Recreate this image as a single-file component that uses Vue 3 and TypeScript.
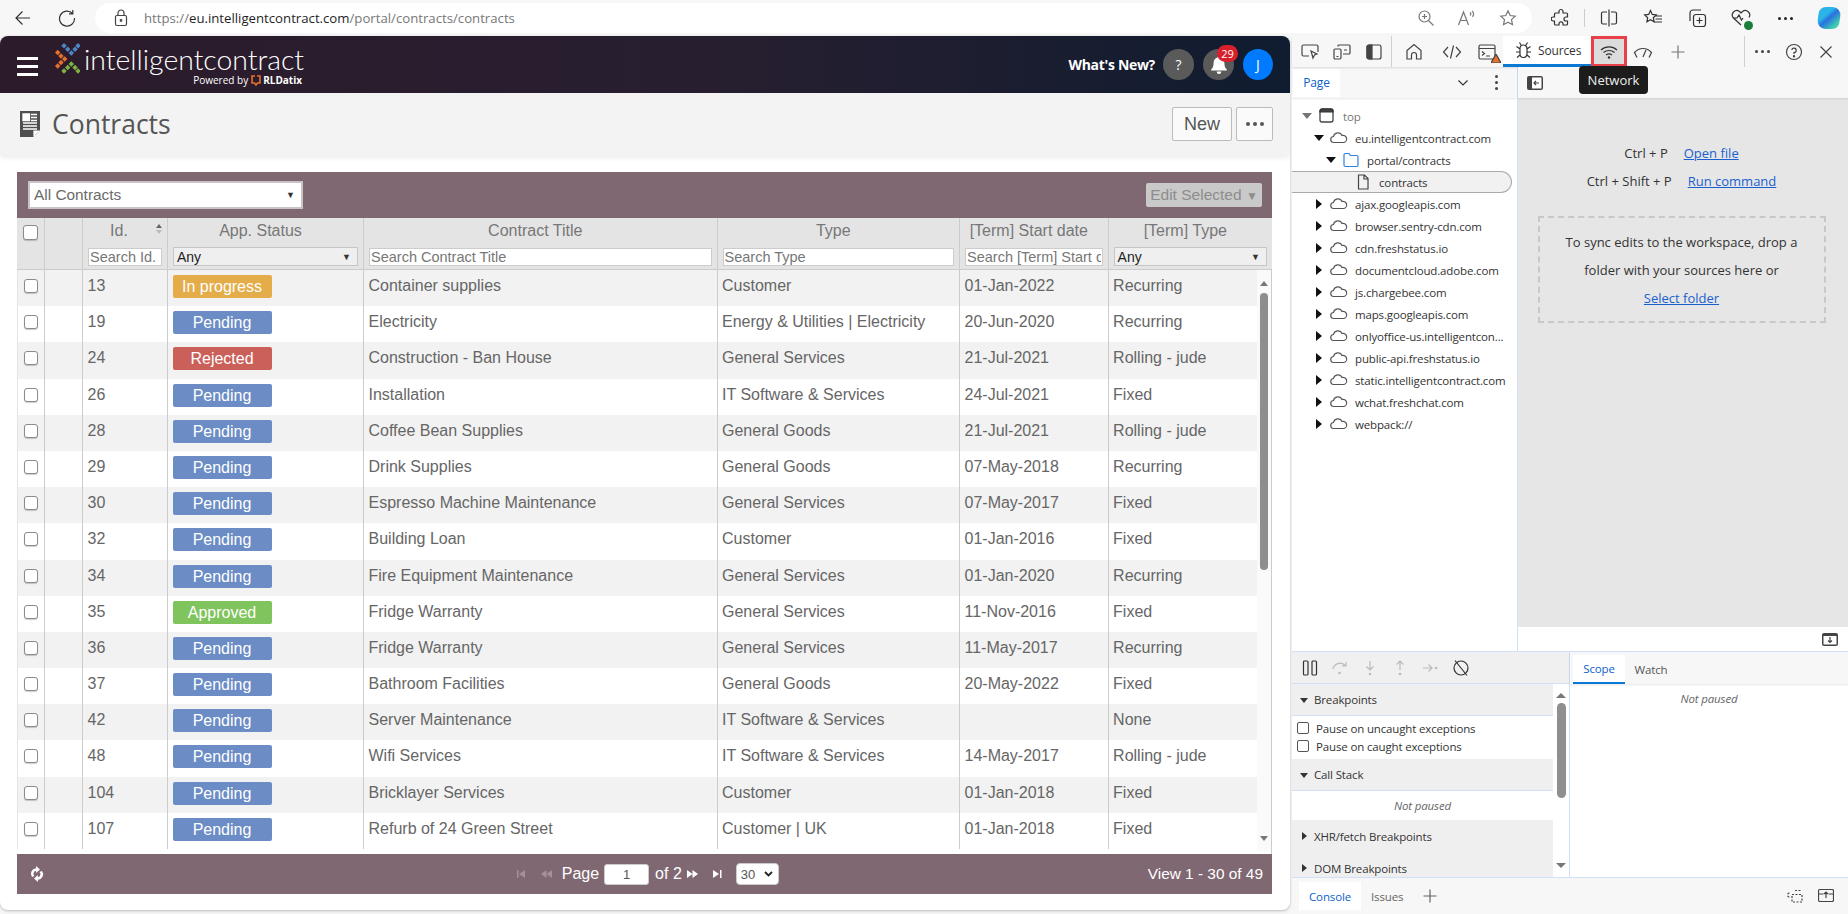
<script setup lang="ts">
interface Row { id: number; status: string; title: string; type: string; start: string; term: string }
const statusClass: Record<string, string> = { 'In progress': 'st-progress', Pending: 'st-pending', Rejected: 'st-rejected', Approved: 'st-approved' }
const rows: Row[] = [
  { id: 13, status: 'In progress', title: 'Container supplies', type: 'Customer', start: '01-Jan-2022', term: 'Recurring' },
  { id: 19, status: 'Pending', title: 'Electricity', type: 'Energy & Utilities | Electricity', start: '20-Jun-2020', term: 'Recurring' },
  { id: 24, status: 'Rejected', title: 'Construction - Ban House', type: 'General Services', start: '21-Jul-2021', term: 'Rolling - jude' },
  { id: 26, status: 'Pending', title: 'Installation', type: 'IT Software & Services', start: '24-Jul-2021', term: 'Fixed' },
  { id: 28, status: 'Pending', title: 'Coffee Bean Supplies', type: 'General Goods', start: '21-Jul-2021', term: 'Rolling - jude' },
  { id: 29, status: 'Pending', title: 'Drink Supplies', type: 'General Goods', start: '07-May-2018', term: 'Recurring' },
  { id: 30, status: 'Pending', title: 'Espresso Machine Maintenance', type: 'General Services', start: '07-May-2017', term: 'Fixed' },
  { id: 32, status: 'Pending', title: 'Building Loan', type: 'Customer', start: '01-Jan-2016', term: 'Fixed' },
  { id: 34, status: 'Pending', title: 'Fire Equipment Maintenance', type: 'General Services', start: '01-Jan-2020', term: 'Recurring' },
  { id: 35, status: 'Approved', title: 'Fridge Warranty', type: 'General Services', start: '11-Nov-2016', term: 'Fixed' },
  { id: 36, status: 'Pending', title: 'Fridge Warranty', type: 'General Services', start: '11-May-2017', term: 'Recurring' },
  { id: 37, status: 'Pending', title: 'Bathroom Facilities', type: 'General Goods', start: '20-May-2022', term: 'Fixed' },
  { id: 42, status: 'Pending', title: 'Server Maintenance', type: 'IT Software & Services', start: '', term: 'None' },
  { id: 48, status: 'Pending', title: 'Wifi Services', type: 'IT Software & Services', start: '14-May-2017', term: 'Rolling - jude' },
  { id: 104, status: 'Pending', title: 'Bricklayer Services', type: 'Customer', start: '01-Jan-2018', term: 'Fixed' },
  { id: 107, status: 'Pending', title: 'Refurb of 24 Green Street', type: 'Customer | UK', start: '01-Jan-2018', term: 'Fixed' },
]
interface Node { label: string; depth: number; arrow: '' | 'open' | 'closed' | 'muted'; icon: 'win' | 'cloud' | 'folder' | 'file'; sel?: boolean }
const hosts = ['ajax.googleapis.com', 'browser.sentry-cdn.com', 'cdn.freshstatus.io', 'documentcloud.adobe.com', 'js.chargebee.com', 'maps.googleapis.com', 'onlyoffice-us.intelligentcon...', 'public-api.freshstatus.io', 'static.intelligentcontract.com', 'wchat.freshchat.com', 'webpack://']
const tree: Node[] = [
  { label: 'top', depth: 0, arrow: 'muted', icon: 'win' },
  { label: 'eu.intelligentcontract.com', depth: 1, arrow: 'open', icon: 'cloud' },
  { label: 'portal/contracts', depth: 2, arrow: 'open', icon: 'folder' },
  { label: 'contracts', depth: 3, arrow: '', icon: 'file', sel: true },
  ...hosts.map((label): Node => ({ label, depth: 1, arrow: 'closed', icon: 'cloud' })),
]
const diamonds = [
  ...[[9, 2.7], [12.7, 6.3], [16.3, 10], [20, 6.3], [23, 2.7]].map(p => ({ p, c: '#4d86c6' })),
  ...[[2.7, 9.5], [6, 13], [9.7, 16], [6, 19.5], [2.7, 23]].map(p => ({ p, c: '#e8702a' })),
  ...[[9, 28], [12.7, 24.5], [16.3, 21], [20, 24.5], [23, 28]].map(p => ({ p, c: '#7cb342' })),
]
function diamond(p: number[]): string {
  const [x, y] = p
  const r = 2.7
  return `${x},${y - r} ${x + r},${y} ${x},${y + r} ${x - r},${y}`
}
</script>

<template>
  <div class="screen">
    <header class="chrome">
      <button class="nav nav-back" aria-label="Back">
        <svg width="18" height="18" viewBox="0 0 18 18"><path d="M16 9H2M8.500 2.500 2 9l6.500 6.500" /></svg>
      </button>
      <button class="nav nav-reload" aria-label="Reload">
        <svg width="18" height="18" viewBox="0 0 18 18"><path d="M14.500 4.500A7.500 7.500 0 1 0 16.500 9M14.800 1v3.800H11" /></svg>
      </button>
      <div class="address">
        <svg class="lock" width="14" height="18" viewBox="0 0 14 18"><rect x="1.500" y="6.500" width="11" height="10" rx="1.500" /><path d="M4 6.500V4a3 3 0 0 1 6 0v2.500" /><circle cx="7" cy="11.500" r=".8" /></svg>
        <span class="url"><span>https://</span><b>eu.intelligentcontract.com</b><span>/portal/contracts/contracts</span></span>
        <div class="addr-icons">
          <svg width="18" height="18" viewBox="0 0 18 18"><circle cx="7.500" cy="7.500" r="5.500" /><path d="m11.500 11.500 5 5M5 7.500h5M7.500 5v5" /></svg>
          <svg width="20" height="18" viewBox="0 0 20 18"><path d="m1.500 16 5-13 5 13M3.500 11.500h6M13 3.500c1 .8 1 2 .2 3M15 2c2 1.500 2 4 .5 5.800" /></svg>
          <svg width="18" height="18" viewBox="0 0 18 18"><path d="m9 1.800 2.200 4.700 5 .6-3.700 3.500 1 5.100L9 13.200l-4.500 2.500 1-5.100L1.800 7.100l5-.6Z" /></svg>
        </div>
      </div>
      <div class="chrome-right">
        <span class="slot"><svg width="20" height="20" viewBox="0 0 20 20"><path d="M8 3.500a2 2 0 0 1 4 0V5h3.500a1 1 0 0 1 1 1v3H15a2 2 0 0 0 0 4h1.500v3a1 1 0 0 1-1 1H12v-1.200a2 2 0 0 0-4 0V17H4.500a1 1 0 0 1-1-1v-3H2.200a2 2 0 0 1 0-4H3.500V6a1 1 0 0 1 1-1H8Z" /></svg></span>
        <i class="chrome-sep"></i>
        <span class="slot"><svg width="20" height="20" viewBox="0 0 20 20"><path d="M10 1.500v17M8 4H4a1.500 1.500 0 0 0-1.500 1.500v9A1.500 1.500 0 0 0 4 16h4M12 4h4a1.500 1.500 0 0 1 1.500 1.500v9A1.500 1.500 0 0 1 16 16h-4" /></svg></span>
        <span class="slot"><svg width="20" height="20" viewBox="0 0 20 20"><path d="m7.500 2.500 1.800 3.900 4 .5-3 2.800.8 4.100-3.600-2-3.600 2 .8-4.100-3-2.800 4-.5ZM13 8h6M12.500 11h6.500M11.500 14H19" /></svg></span>
        <span class="slot"><svg width="20" height="20" viewBox="0 0 20 20"><rect x="6.500" y="6.500" width="12" height="12" rx="2.500" /><path d="M12.500 9.500v6M9.500 12.500h6M3 13V5a3 3 0 0 1 3-3h8" /></svg></span>
        <span class="slot health">
          <svg width="22" height="20" viewBox="0 0 22 20"><path d="M11 17 3 9.500A4.500 4.500 0 0 1 9.500 3.500L11 5l1.500-1.500A4.500 4.500 0 0 1 19 9.500M3 10h4l2-3 2.500 5 1.500-2" /></svg>
          <i class="health-ok"></i>
        </span>
        <span class="slot dots-slot"><i></i><i></i><i></i></span>
        <span class="copilot"></span>
      </div>
    </header>

    <div class="work">
      <main class="page">
        <div class="app-header">
          <div class="brand">
            <span class="burger"><i></i><i></i><i></i></span>
            <svg class="logo-mark" width="25" height="31" viewBox="0 0 25 31">
              <polygon v-for="(d, i) in diamonds" :key="i" :points="diamond(d.p)" :fill="d.c" />
            </svg>
            <div class="wordmark">
              <div class="word">intelligentcontract</div>
              <div class="powered"><span>Powered by</span><svg width="10" height="11" viewBox="0 0 10 11"><path d="M4 1H1v7h2.500l1.500 2 1.500-2H9V1H6" /></svg><b>RLDatix</b></div>
            </div>
          </div>
          <div class="top-actions">
            <span class="whats">What's New?</span>
            <span class="round gray">?</span>
            <span class="round gray bell">
              <svg width="16" height="18" viewBox="0 0 16 18"><path d="M8 0a1.400 1.400 0 0 1 1.400 1.500C12 2 13.400 4.200 13.400 7c0 3.500.8 5 2.400 6.500v1H.2v-1C1.800 12 2.600 10.500 2.600 7 2.600 4.200 4 2 6.600 1.500A1.400 1.400 0 0 1 8 0ZM5.800 15.500h4.400A2.200 2.200 0 0 1 8 18a2.200 2.200 0 0 1-2.200-2.500Z" fill="#fff" /></svg>
              <em>29</em>
            </span>
            <span class="round blue">J</span>
          </div>
        </div>

        <div class="title-bar">
          <h1>
            <svg width="20" height="26" viewBox="0 0 20 26"><path d="M0 0h20v19l-7 7H0Z" fill="#4f4f4f" /><path d="M3 3h6.500v6.500H3ZM11 3.500h6M11 6.500h6M11 9.500h6M3 12h14M3 15h14M3 18h14" stroke="#fff" fill="#fff" stroke-width="1.300" /><path d="M14 25v-5h5" fill="#fff" stroke="#fff" /></svg>
            <span>Contracts</span>
          </h1>
          <div class="title-actions">
            <button class="btn-new">New</button>
            <button class="btn-more"><i></i><i></i><i></i></button>
          </div>
        </div>

        <section class="grid-card">
          <div class="grid-top">
            <div class="view-select"><span>All Contracts</span><small>▼</small></div>
            <button class="edit-selected">Edit Selected <small>▼</small></button>
          </div>

          <div class="thead">
            <div class="th check-cell"><input class="box box-head" type="checkbox" /></div>
            <div class="th"></div>
            <div class="th"><div class="th-label id-label">Id.<span class="sorter"><i></i><i></i></span></div><input class="filter" placeholder="Search Id." /></div>
            <div class="th"><div class="th-label">App. Status</div><div class="filter-select"><span>Any</span><small>▼</small></div></div>
            <div class="th"><div class="th-label">Contract Title</div><input class="filter" placeholder="Search Contract Title" /></div>
            <div class="th"><div class="th-label">Type</div><input class="filter" placeholder="Search Type" /></div>
            <div class="th"><div class="th-label">[Term] Start date</div><input class="filter" placeholder="Search [Term] Start date" /></div>
            <div class="th last"><div class="th-label">[Term] Type</div><div class="filter-select"><span>Any</span><small>▼</small></div></div>
          </div>

          <div class="tbody-wrap">
            <div class="tbody">
              <div v-for="r in rows" :key="r.id" class="tr">
                <div class="td check-cell"><input class="box" type="checkbox" /></div>
                <div class="td"></div>
                <div class="td">{{ r.id }}</div>
                <div class="td"><span class="status" :class="statusClass[r.status]">{{ r.status }}</span></div>
                <div class="td">{{ r.title }}</div>
                <div class="td">{{ r.type }}</div>
                <div class="td">{{ r.start }}</div>
                <div class="td">{{ r.term }}</div>
              </div>
            </div>
            <div class="vscroll"><i class="up"></i><b></b><i class="down"></i></div>
          </div>

          <div class="grid-foot">
            <svg class="refresh" width="14" height="16" viewBox="0 0 14 16"><path d="M2 11A5.500 5.500 0 0 1 6 2.200V0l4 3.500L6 7V4.800A3 3 0 0 0 4.500 10ZM12 5a5.500 5.500 0 0 1-4 8.800V16l-4-3.500L8 9v2.200A3 3 0 0 0 9.500 6Z" fill="#fff" /></svg>
            <div class="pager">
              <svg class="pg dim" width="9" height="8" viewBox="0 0 9 8"><path d="M0 0h1.500v8H0ZM8 0v8L2 4Z" /></svg>
              <svg class="pg dim pg-prev" width="11" height="8" viewBox="0 0 11 8"><path d="M5.500 0v8L0 4ZM11 0v8L5.500 4Z" /></svg>
              <span class="page-word">Page</span>
              <input class="page-input" value="1" />
              <span>of 2</span>
              <svg class="pg pg-next" width="11" height="8" viewBox="0 0 11 8"><path d="M0 0v8l5.500-4ZM5.500 0v8L11 4Z" /></svg>
              <svg class="pg pg-last" width="9" height="8" viewBox="0 0 9 8"><path d="M0 0v8l6-4ZM7 0h1.500v8H7Z" /></svg>
              <div class="size-select">30<svg width="9" height="6" viewBox="0 0 9 6"><path d="m1 1 3.500 3.500L8 1" /></svg></div>
            </div>
            <div class="view-count">View 1 - 30 of 49</div>
          </div>
        </section>
      </main>

      <aside class="devtools">
        <div class="dt-toolbar">
          <div class="dt-group first">
            <span class="ic32"><svg width="18" height="16" viewBox="0 0 18 16"><path d="M8 12H2.500A1.500 1.500 0 0 1 1 10.500v-8A1.500 1.500 0 0 1 2.500 1h13A1.500 1.500 0 0 1 17 2.500V8" /><path d="m10 7 6 3-2.500 1L12 14Z" /></svg></span>
            <span class="ic32"><svg width="18" height="16" viewBox="0 0 18 16"><rect x="1" y="5" width="7" height="10" rx="1.200" /><path d="M5 2.500V2a1 1 0 0 1 1-1h10a1 1 0 0 1 1 1v7a1 1 0 0 1-1 1h-6M11 6h3M3.500 12.500h2" /></svg></span>
            <span class="ic32"><svg width="16" height="16" viewBox="0 0 16 16"><rect x="1" y="1" width="14" height="14" rx="2" /><path d="M1 3a2 2 0 0 1 2-2h3v14H3a2 2 0 0 1-2-2Z" fill="#444" /></svg></span>
          </div>
          <i class="dt-sep"></i>
          <div class="dt-group main-tabs">
            <span class="ic38"><svg width="18" height="18" viewBox="0 0 18 18"><path d="M2 7.500 9 1.500l7 6V16h-4.500v-4a2.500 2.500 0 0 0-5 0v4H2Z" /></svg></span>
            <span class="ic38 code"><svg width="20" height="16" viewBox="0 0 20 16"><path d="M6 3 1.500 8 6 13M14 3l4.500 5L14 13M11.500 1.500 8.500 14.500" /></svg></span>
            <span class="ic32 console">
              <svg width="18" height="16" viewBox="0 0 18 16"><rect x="1" y="1" width="16" height="14" rx="1.500" /><path d="M1 4.500h16M4 7.500l2.500 2L4 11.500M8 12h4" /></svg>
              <svg class="warn" width="10" height="9" viewBox="0 0 10 9"><path d="M5 0 10 9H0Z" fill="#e8702a" /></svg>
            </span>
          </div>
          <div class="tab-sources">
            <svg width="17" height="18" viewBox="0 0 17 18"><path d="M5 7.500a3.500 3.500 0 0 1 7 0V13a3.500 3.500 0 0 1-7 0ZM6 4 4.500 1.500M11 4l1.500-2.500M5 8 1.500 5.500M12 8l3.500-2.500M5 11H1M12 11h4M5 14l-3 2.500M12 14l3 2.500" /></svg>
            <span>Sources</span>
          </div>
          <div class="tab-network"><svg width="18" height="14" viewBox="0 0 18 14"><path d="M1 5a12 12 0 0 1 16 0M3.500 7.500a8.500 8.500 0 0 1 11 0M6 10a5 5 0 0 1 6 0" /><circle cx="9" cy="12.500" r="1.200" fill="#333" stroke="none" /></svg></div>
          <span class="ic32 perf"><svg width="20" height="14" viewBox="0 0 20 14"><path d="M4 12.500 1.500 7.500A11 11 0 0 1 18.500 7.500L16 12.500M10 12l3-7" /></svg></span>
          <span class="ic32 plus"><svg width="16" height="16" viewBox="0 0 16 16"><path d="M8 1.500v13M1.500 8h13" /></svg></span>
          <i class="dt-sep sep-end"></i>
          <span class="ic32 dt-more"><i></i><i></i><i></i></span>
          <span class="ic32"><svg width="18" height="18" viewBox="0 0 18 18"><circle cx="9" cy="9" r="7.500" /><path d="M6.800 7A2.200 2.200 0 1 1 9 9.500V11" /><circle cx="9" cy="13.300" r=".6" /></svg></span>
          <span class="ic32"><svg width="14" height="14" viewBox="0 0 14 14"><path d="m1.500 1.500 11 11M12.500 1.500l-11 11" /></svg></span>
        </div>
        <div class="tooltip">Network</div>

        <div class="dt-upper">
          <div class="nav-pane">
            <div class="pane-tabs">
              <span class="page-tab">Page</span>
              <svg class="chev" width="12" height="8" viewBox="0 0 12 8"><path d="m1.500 1.500 4.500 4.500 4.500-4.500" /></svg>
              <span class="vdots"><i></i><i></i><i></i></span>
            </div>
            <div class="tree">
              <div v-for="n in tree" :key="n.label" class="tree-row" :class="{ selected: n.sel }" :style="{ paddingLeft: 9 + n.depth * 12 + 'px' }">
                <span class="arrow" :class="n.arrow"></span>
                <svg class="t-icon" width="20" height="16" viewBox="0 0 20 16">
                  <template v-if="n.icon === 'win'"><rect x="3" y="1" width="13" height="13" rx="2" stroke="#444" stroke-width="1.300" /><path d="M3 3a2 2 0 0 1 2-2h9a2 2 0 0 1 2 2v1H3Z" fill="#444" /></template>
                  <path v-else-if="n.icon === 'cloud'" d="M5 12.500a3 3 0 0 1-.5-6A4.500 4.500 0 0 1 13 5.500a3.500 3.500 0 0 1 2 7Z" stroke="#555" />
                  <path v-else-if="n.icon === 'folder'" d="M3 3a1.500 1.500 0 0 1 1.500-1.500H8L9.500 3.500h6A1.500 1.500 0 0 1 17 5v8a1.500 1.500 0 0 1-1.500 1.500h-11A1.500 1.500 0 0 1 3 13Z" stroke="#2f7fe0" />
                  <path v-else d="M5.500 1h6L15 4.500V15H5.500ZM11 1v4h4" stroke="#444" />
                </svg>
                <span class="t-label" :class="{ muted: n.icon === 'win' }">{{ n.label }}</span>
              </div>
            </div>
          </div>
          <div class="editor-pane">
            <div class="pane-tabs editor-tabs">
              <svg width="16" height="14" viewBox="0 0 16 14"><rect width="16" height="14" rx="2" fill="#444" /><rect x="5" y="1.500" width="9.500" height="11" fill="#fff" /><path d="M12 7H7M9 4.800 7 7l2 2.200" stroke="#444" fill="none" /></svg>
            </div>
            <div class="editor-body">
              <div class="shortcut"><span>Ctrl + P</span><a>Open file</a></div>
              <div class="shortcut"><span>Ctrl + Shift + P</span><a>Run command</a></div>
              <div class="drop-box">
                <p>To sync edits to the workspace, drop a</p>
                <p>folder with your sources here or</p>
                <p><a>Select folder</a></p>
              </div>
            </div>
            <div class="editor-foot">
              <svg width="16" height="13" viewBox="0 0 16 13"><rect width="16" height="13" rx="2" fill="#444" /><path d="M1.500 3h13v8.500h-13Z" fill="#fff" /><path d="M8 4v5M6 7.500l2 2 2-2" stroke="#444" fill="none" /></svg>
            </div>
          </div>
        </div>

        <div class="dt-lower">
          <div class="dbg-left">
            <div class="dbg-tools">
              <svg width="16" height="16" viewBox="0 0 16 16"><rect x="1.500" y="1" width="4.500" height="14" rx="1" /><rect x="10" y="1" width="4.500" height="14" rx="1" /></svg>
              <svg class="dim" width="16" height="16" viewBox="0 0 16 16"><path d="M1 9a7 7 0 0 1 12-3.500M14 2v4h-4" /><circle cx="7.500" cy="13" r="1.300" fill="#bbb" stroke="none" /></svg>
              <svg class="dim" width="16" height="16" viewBox="0 0 16 16"><path d="M8 1v9M4.500 6.500 8 10l3.500-3.500" /><circle cx="8" cy="14" r="1.300" fill="#bbb" stroke="none" /></svg>
              <svg class="dim" width="16" height="16" viewBox="0 0 16 16"><path d="M8 10V1M4.500 4.500 8 1l3.500 3.500" /><circle cx="8" cy="14" r="1.300" fill="#bbb" stroke="none" /></svg>
              <svg class="dim" width="16" height="16" viewBox="0 0 16 16"><path d="M1 8h9M6.500 4.500 10 8l-3.500 3.500" /><circle cx="14" cy="8" r="1.300" fill="#bbb" stroke="none" /></svg>
              <svg width="18" height="18" viewBox="0 0 18 18"><circle cx="9" cy="9" r="7" /><path d="M3 1.500 15 16.500" /></svg>
            </div>
            <div class="dbg-scrollarea">
              <div class="dbg-sections">
                <div class="sec-head"><span class="arrow-s open"></span>Breakpoints</div>
                <div class="sec-break">
                  <label><input class="box-dt" type="checkbox" />Pause on uncaught exceptions</label>
                  <label><input class="box-dt" type="checkbox" />Pause on caught exceptions</label>
                </div>
                <div class="sec-head"><span class="arrow-s open"></span>Call Stack</div>
                <div class="sec-empty"><em>Not paused</em></div>
                <div class="sec-head plain"><span class="arrow-s closed"></span>XHR/fetch Breakpoints</div>
                <div class="sec-head plain"><span class="arrow-s closed"></span>DOM Breakpoints</div>
              </div>
              <div class="dbg-scroll"><i class="up"></i><b></b><i class="down"></i></div>
            </div>
          </div>
          <div class="dbg-right">
            <div class="scope-tabs"><span class="scope on">Scope</span><span class="scope">Watch</span></div>
            <div class="scope-empty"><em>Not paused</em></div>
          </div>
        </div>

        <div class="drawer">
          <span class="drawer-tab">Console</span>
          <span class="drawer-issues">Issues</span>
          <svg class="drawer-plus" width="14" height="14" viewBox="0 0 14 14"><path d="M7 .5v13M.5 7h13" /></svg>
          <span class="drawer-right">
            <svg width="16" height="14" viewBox="0 0 16 14"><path d="M5 5.500h10v7.500H5ZM8 1.500h7M2.500 4a2 2 0 0 0 0 4" stroke-dasharray="2 1.500" /></svg>
            <svg width="16" height="13" viewBox="0 0 16 13"><rect x=".5" y=".5" width="15" height="12" rx="1.500" /><path d="M.5 5h5M10.500 5h5M8 9V3M6 5l2-2 2 2" /></svg>
          </span>
        </div>
      </aside>
    </div>
  </div>
</template>

<style>
html, body { margin: 0; background: #f7f7f7; overflow: hidden; }
</style>

<style scoped>
.screen { width: 1848px; height: 914px; overflow: hidden; display: flex; flex-direction: column; background: #f7f7f7; font-family: "Liberation Sans", Arial, sans-serif; }
svg { fill: none; stroke: #333; stroke-width: 1.2; display: block; }
i, em { display: block; }
button { font-family: inherit; }

/* browser chrome */
.chrome { height: 36px; flex: none; display: flex; align-items: center; }
.nav { border: 0; background: none; padding: 0; width: 44px; height: 36px; display: flex; align-items: center; justify-content: center; }
.nav-back { margin-left: 1px; }
.nav-reload { margin-right: 6px; }
.address { width: 1437px; height: 30px; background: #fff; border-radius: 15px; display: flex; align-items: center; box-sizing: border-box; padding-left: 19px; }
.lock { stroke: #444; }
.url { margin-left: 16px; font: 13.200px "Open Sans", sans-serif; color: #777; white-space: nowrap; }
.url b { font-weight: 400; color: #1f1f1f; }
.addr-icons { margin-left: auto; display: flex; align-items: center; gap: 22px; padding-right: 15px; }
.addr-icons svg { stroke: #777; }
.chrome-right { display: flex; align-items: center; margin-left: 7px; flex: 1; }
.slot { width: 44px; height: 30px; display: flex; align-items: center; justify-content: center; position: relative; flex: none; }
.chrome-sep { width: 1px; height: 18px; background: #ccc; margin: 0 2px 0 1px; }
.health-ok { position: absolute; right: 10px; bottom: 3px; width: 9px; height: 9px; border-radius: 50%; background: #1d7d3a; }
.dots-slot { gap: 3px; }
.dots-slot i { width: 3px; height: 3px; border-radius: 50%; background: #222; }
.copilot { width: 22px; height: 22px; margin-left: 11px; border-radius: 6px 9px 6px 9px; background: linear-gradient(135deg, #2ab4e8 0 35%, #2a70e0 50%, #40d0b0 85%); transform: skewX(-8deg); }

.work { flex: 1; display: flex; min-height: 0; align-items: flex-start; }

/* page */
.page { width: 1290px; height: 874px; flex: none; background: #fff; border-radius: 8px; box-shadow: 0 1px 3px rgba(0,0,0,.25); overflow: hidden; display: flex; flex-direction: column; }
.app-header { height: 57px; flex: none; background: linear-gradient(90deg, #2c1b2b 0%, #271f30 55%, #101c30 100%); display: flex; justify-content: space-between; align-items: center; padding: 0 17px; box-sizing: border-box; }
.brand { display: flex; align-items: flex-start; height: 100%; }
.burger { width: 21px; display: flex; flex-direction: column; gap: 5px; margin-top: 21px; }
.burger i { height: 3px; background: #fff; }
.logo-mark { margin: 7px 0 0 17px; stroke: none; }
.wordmark { margin-left: 4px; color: #fff; display: flex; flex-direction: column; align-items: flex-end; }
.word { font: 300 28.400px/29px Lato, sans-serif; margin-top: 9px; white-space: nowrap; }
.powered { display: flex; align-items: center; font: 10px/12px "Open Sans", sans-serif; margin-right: 2px; }
.powered svg { margin: 0 2px 0 3px; stroke: #e8702a; stroke-width: 1.600; }
.powered b { font-family: "Open Sans", sans-serif; }
.top-actions { display: flex; align-items: center; }
.whats { font: 700 14px "Open Sans", sans-serif; letter-spacing: -.3px; color: #fff; margin-right: 8px; }
.round { width: 31px; height: 31px; border-radius: 50%; display: flex; align-items: center; justify-content: center; color: #fff; font: 14px "Open Sans", sans-serif; position: relative; }
.round.gray { background: #5a5a5a; margin-right: 9px; }
.round.blue { background: #007bff; width: 30px; }
.bell svg { stroke: none; margin-top: 1px; }
.bell em { position: absolute; left: 14px; top: -4px; width: 21px; height: 17px; border-radius: 9px; background: #d9202a; color: #fff; font: 11px/17px "Open Sans", sans-serif; text-align: center; }

.title-bar { height: 62px; flex: none; background: #f3f3f3; box-shadow: 0 2px 6px rgba(0,0,0,.09); display: flex; justify-content: space-between; align-items: center; padding: 0 17px 0 20px; box-sizing: border-box; position: relative; }
h1 { margin: 0; display: flex; align-items: center; gap: 12px; font: 400 26.500px "Open Sans", sans-serif; color: #555; }
h1 span { margin-top: -1px; }
h1 svg { stroke: none; }
.title-actions { display: flex; gap: 4px; }
.btn-new { width: 60px; height: 34px; background: #fafafa; border: 1px solid #bbb; border-radius: 2px; font: 18px "Liberation Sans", sans-serif; color: #555; padding: 0; }
.btn-more { width: 37px; height: 34px; background: #fafafa; border: 1px solid #bbb; border-radius: 2px; display: flex; align-items: center; justify-content: center; gap: 3px; padding: 0; }
.btn-more i { width: 4px; height: 4px; border-radius: 50%; background: #555; }

.grid-card { margin: 17px 18px 0 17px; display: flex; flex-direction: column; font-size: 16px; color: #666; }
.grid-top { height: 46px; background: #806872; display: flex; align-items: center; justify-content: space-between; padding: 0 10px 0 11px; box-sizing: border-box; }
.view-select { width: 275px; height: 28px; margin-bottom: 1px; box-sizing: border-box; background: #fff; border: 2px solid #c9c2c6; display: flex; align-items: center; justify-content: space-between; padding: 0 6px 0 4px; font-size: 15.400px; color: #6b6b6b; }
.view-select small, .filter-select small { font-size: 9px; color: #333; }
.edit-selected { width: 116px; height: 24px; border: 0; border-radius: 2px; background: #c9c9c9; color: #8d8d8d; font-size: 15.500px; padding: 0; white-space: nowrap; }
.edit-selected small { font-size: 12px; }

.thead, .tr { display: grid; }
.thead { grid-template-columns: 28px 38px 85px 196px 353.500px 242.500px 148.600px 163.400px; height: 52px; background: #e4e4e4; border-bottom: 1px solid #ccc; box-sizing: border-box; }
.th { border-right: 1px solid #ccc; box-sizing: border-box; padding: 0 5px; min-width: 0; display: flex; flex-direction: column; }
.th.last { border-right: 0; }
.th-label { height: 30px; line-height: 26px; text-align: center; color: #777; white-space: nowrap; position: relative; padding-right: 10px; }
.id-label { padding-right: 12px; }
.sorter { position: absolute; right: 0; top: 6px; display: flex; flex-direction: column; gap: 2px; }
.sorter i { width: 0; height: 0; border: 3.500px solid transparent; border-top: 0; border-bottom: 4px solid #666; }
.sorter i + i { border-bottom: 0; border-top: 4px solid #bbb; }
.filter { height: 18px; width: 100%; box-sizing: border-box; border: 1px solid #ccc; background: #fff; padding: 0 1px; font: 14.500px "Liberation Sans", sans-serif; color: #666; outline: 0; min-width: 0; }
.filter::placeholder { color: #777; opacity: 1; }
.filter-select { height: 19px; margin-top: -1px; box-sizing: border-box; border: 1px solid #c6c6c6; background: #efefef; color: #222; font-size: 14px; display: flex; align-items: center; justify-content: space-between; padding: 0 6px 0 3px; }
.check-cell { padding: 0 !important; display: flex; }
.box { appearance: none; margin: 9px 0 0 6px; width: 14px; height: 14px; box-sizing: border-box; border: 1px solid #8b8b8b; border-radius: 3px; background: #fff; box-shadow: 0 1px 1px rgba(0,0,0,.2); }
.box-head { margin: 7px 0 0 6px; width: 15px; height: 15px; }

.tbody-wrap { height: 584px; display: flex; background: #fff; border-right: 1px solid #ccc; overflow: hidden; box-sizing: border-box; }
.tbody { width: 1240px; flex: none; height: 581px; overflow: hidden; }
.tr { grid-template-columns: 28px 38px 85px 196px 353.500px 242.500px 148.600px 148.400px; height: 36.200px; }
.tr:nth-child(odd) { background: #f2f2f2; }
.td { border-right: 1px solid #ccc; box-sizing: border-box; padding: 6px 0 0 4.500px; line-height: 20px; color: #666; white-space: nowrap; min-width: 0; overflow: hidden; }
.td:first-child { border-left: 1px solid #e4e4e4; }
.td:last-child { border-right: 0; }
.status { display: block; width: 99px; height: 23px; margin-top: -1px; line-height: 23px; text-align: center; color: #fff; border-radius: 2px; }
.st-progress { background: #e5ac4a; }
.st-pending { background: #6b8cc5; }
.st-rejected { background: #cb5f5a; }
.st-approved { background: #7fc45c; }
.vscroll { flex: 1; background: #fafafa; height: 581px; position: relative; display: flex; flex-direction: column; align-items: center; padding-top: 11px; box-sizing: border-box; }
.vscroll b { width: 8px; height: 277px; margin-top: 7px; border-radius: 4px; background: #8e8e8e; }
.vscroll .up { width: 0; border: 4.500px solid transparent; border-top: 0; border-bottom: 5px solid #777; }
.vscroll .down { position: absolute; bottom: 10px; width: 0; border: 4.500px solid transparent; border-bottom: 0; border-top: 5px solid #777; }

.grid-foot { height: 40px; background: #806872; display: grid; grid-template-columns: 1fr auto 1fr; align-items: center; padding: 0 9px 0 13px; color: #fff; box-sizing: border-box; }
.refresh { stroke: none; }
.pager { display: flex; align-items: center; margin-left: 3px; font-size: 16px; }
.pg { fill: #fff; stroke: none; }
.pg.dim { fill: #a78f99; }
.pg-prev { margin: 0 9.500px 0 15px; }
.pg-next { margin-left: 5.500px; }
.pg-last { margin-left: 15px; }
.page-word { margin-right: 5px; }
.page-input { width: 45px; height: 21px; box-sizing: border-box; border: 1px solid #ccc; border-radius: 3px; background: #fff; text-align: center; font: 13px "Liberation Sans", sans-serif; color: #555; margin-right: 6px; padding: 0; }
.size-select { width: 43px; height: 22px; box-sizing: border-box; margin-left: 13.500px; background: #fff; border: 1px solid #ccc; border-radius: 4px; color: #555; font-size: 13px; display: flex; align-items: center; justify-content: space-between; padding: 0 5px 0 4px; }
.size-select svg { stroke: #222; stroke-width: 1.800; }
.view-count { text-align: right; color: #fff; font-size: 15.400px; }

/* devtools */
.devtools { flex: 1; height: 878px; position: relative; display: flex; flex-direction: column; padding-left: 2px; box-sizing: border-box; font: 11.500px "Open Sans", sans-serif; color: #333; letter-spacing: -.15px; }
.dt-toolbar { height: 31px; flex: none; display: flex; align-items: center; background: #f7f7f7; box-shadow: 0 1px 2px rgba(0,0,0,.12); position: relative; z-index: 1; }
.dt-group { display: flex; align-items: center; }
.first { margin-left: 2px; }
.ic32 { width: 32px; height: 31px; display: flex; align-items: center; justify-content: center; position: relative; flex: none; }
.ic38 { width: 38px; height: 31px; display: flex; align-items: center; justify-content: center; flex: none; }
.ic32 svg, .ic38 svg { stroke: #444; }
.dt-sep { width: 1px; height: 31px; background: #d0d0d0; margin-left: 1px; flex: none; }
.main-tabs { margin-left: 3px; }
.warn { position: absolute; right: 2px; bottom: 4px; stroke: none; }
.tab-sources { width: 88px; height: 31px; box-sizing: border-box; background: #fff; border-bottom: 3px solid #0b78d4; display: flex; align-items: center; gap: 6px; padding-left: 12px; font-size: 12px; flex: none; }
.tab-network { width: 36px; height: 31px; box-sizing: border-box; background: #dcdcdc; border: 3px solid #e8404a; display: flex; align-items: center; justify-content: center; flex: none; }
.plus { margin-left: 3px; }
.plus svg { stroke: #777; }
.sep-end { margin-left: 50px; }
.dt-more { gap: 3px; margin-left: 1px; }
.dt-more i { width: 3px; height: 3px; border-radius: 50%; background: #444; }
.tooltip { position: absolute; left: 289px; top: 30px; z-index: 3; width: 69px; height: 28px; background: #1c1c1c; color: #eee; border-radius: 4px; font-size: 13px; letter-spacing: 0; display: flex; align-items: center; justify-content: center; }

.dt-upper { height: 585px; flex: none; display: flex; background: #fff; border-bottom: 1px solid #cfe0f7; box-sizing: border-box; }
.nav-pane { width: 225px; flex: none; border-right: 1px solid #cfe0f7; overflow: hidden; }
.pane-tabs { height: 31px; background: #f7f7f7; display: flex; align-items: center; box-shadow: 0 1px 2px rgba(0,0,0,.1); position: relative; }
.page-tab { width: 47px; height: 28px; margin-left: 1px; background: #fff; color: #0b5fcc; display: flex; align-items: center; justify-content: center; font-size: 12px; }
.chev { margin-left: 117px; stroke: #333; }
.vdots { display: flex; flex-direction: column; gap: 3px; margin-left: 26px; }
.vdots i { width: 3px; height: 3px; border-radius: 50%; background: #444; }
.tree { padding-top: 7px; }
.tree-row { height: 22px; display: flex; align-items: center; box-sizing: border-box; white-space: nowrap; }
.tree-row.selected { width: 220px; background: #f1f1f1; border: 1px solid #aaa; border-left: 0; border-radius: 0 11px 11px 0; }
.arrow { width: 12px; height: 12px; flex: none; position: relative; }
.arrow.open::after, .arrow.muted::after { content: ""; position: absolute; left: 1px; top: 3px; border: 5px solid transparent; border-bottom: 0; border-top: 6px solid #111; }
.arrow.muted::after { border-top-color: #777; }
.arrow.closed::after { content: ""; position: absolute; left: 3px; top: 1px; border: 5px solid transparent; border-right: 0; border-left: 6px solid #111; }
.t-icon { margin: 0 6px 0 4px; flex: none; }
.t-label { color: #333; }
.t-label.muted { color: #777; }

.editor-pane { flex: 1; display: flex; flex-direction: column; min-width: 0; }
.editor-tabs { padding-left: 9px; background: #f7f7f7; z-index: 1; }
.editor-tabs svg { stroke: none; }
.editor-body { flex: 1; background: #e6e6e6; display: flex; flex-direction: column; align-items: center; padding: 41px 3px 0 0; box-sizing: border-box; color: #333; letter-spacing: 0; }
.shortcut { height: 28px; display: flex; align-items: center; gap: 16px; font-size: 13px; }
a { color: #1a5fd0; text-decoration: underline; }
.drop-box { width: 288px; height: 107px; margin-top: 21px; box-sizing: border-box; border: 2px dashed #c8c8c8; padding-top: 10px; text-align: center; font-size: 13px; }
.drop-box p { margin: 0; height: 28px; line-height: 28px; white-space: nowrap; }
.editor-foot { height: 24px; display: flex; align-items: center; justify-content: flex-end; padding-right: 10px; background: #fff; }
.editor-foot svg { stroke: none; }

.dt-lower { flex: 1; display: flex; min-height: 0; background: #fff; }
.dbg-left { width: 277px; flex: none; border-right: 1px solid #cfe0f7; display: flex; flex-direction: column; }
.dbg-tools { height: 32px; flex: none; background: #f0f0f0; border-bottom: 1px solid #cfe0f7; box-sizing: border-box; display: flex; align-items: center; gap: 14px; padding-left: 10px; }
.dbg-tools svg { stroke: #333; }
.dbg-tools .dim { stroke: #bbb; }
.dbg-scrollarea { flex: 1; display: flex; min-height: 0; }
.dbg-sections { width: 261px; flex: none; overflow: hidden; }
.sec-head { height: 32px; background: #efefef; border-bottom: 1px solid #cfe0f7; box-sizing: border-box; display: flex; align-items: center; }
.sec-head.plain { border-bottom: 0; height: 32px; }
.arrow-s { width: 8px; height: 8px; margin: 0 6px 0 8px; position: relative; flex: none; }
.arrow-s.open::after { content: ""; position: absolute; top: 2px; left: 0; border: 4px solid transparent; border-bottom: 0; border-top: 5px solid #333; }
.arrow-s.closed::after { content: ""; position: absolute; top: 0; left: 2px; border: 4px solid transparent; border-right: 0; border-left: 5px solid #333; }
.sec-break { height: 43px; padding-top: 3px; box-sizing: border-box; }
.sec-break label { height: 18px; display: flex; align-items: center; gap: 7px; padding-left: 5px; }
.box-dt { appearance: none; margin: 0; width: 12px; height: 12px; box-sizing: border-box; border: 1px solid #555; border-radius: 2px; background: #fff; }
.sec-empty { height: 29px; display: flex; align-items: center; justify-content: center; color: #666; }
.dbg-scroll { flex: 1; position: relative; display: flex; flex-direction: column; align-items: center; padding-top: 9px; box-sizing: border-box; }
.dbg-scroll b { width: 9px; height: 95px; border-radius: 5px; background: #8f8f8f; margin-top: 5px; }
.dbg-scroll .up { width: 0; border: 5px solid transparent; border-top: 0; border-bottom: 5px solid #777; }
.dbg-scroll .down { position: absolute; bottom: 9px; width: 0; border: 5px solid transparent; border-bottom: 0; border-top: 5px solid #777; }
.dbg-right { flex: 1; display: flex; flex-direction: column; }
.scope-tabs { height: 32px; background: #f7f7f7; display: flex; padding: 3px 0 0 3px; box-sizing: border-box; box-shadow: 0 1px 2px rgba(0,0,0,.1); }
.scope { width: 52px; height: 29px; display: flex; align-items: center; justify-content: center; color: #555; box-sizing: border-box; }
.scope.on { background: #fff; color: #0b5fcc; border-bottom: 2px solid #0b78d4; }
.scope-empty { text-align: center; padding-top: 7px; color: #666; }

.drawer { height: 37px; flex: none; background: #f7f7f7; border-top: 1px solid #cfe0f7; box-sizing: border-box; display: flex; align-items: center; position: relative; }
.drawer-tab { width: 62px; height: 28px; margin-left: 7px; background: #fff; color: #0b5fcc; display: flex; align-items: center; justify-content: center; }
.drawer-issues { margin-left: 10px; color: #666; }
.drawer-plus { margin-left: 20px; stroke: #666; }
.drawer-right { margin-left: auto; display: flex; gap: 15px; padding-right: 14px; }
.drawer-right svg { stroke: #444; }
</style>
